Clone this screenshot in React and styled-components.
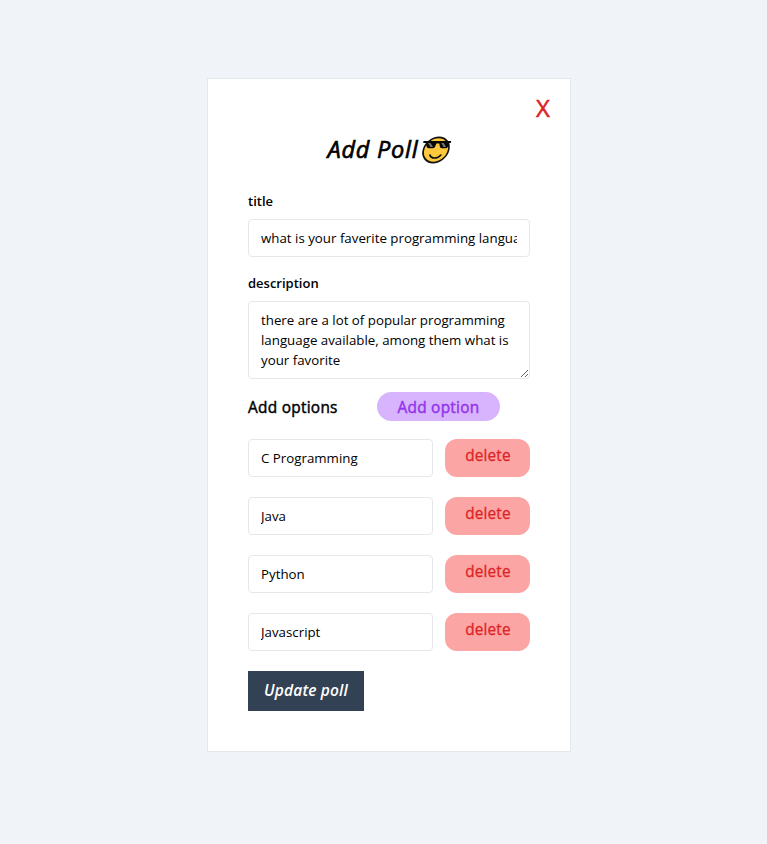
import React from "react";
import styled, { createGlobalStyle, css } from "styled-components";

const GlobalStyle = createGlobalStyle`
  *, *::before, *::after { box-sizing: border-box; }
  body {
    margin: 0;
    background: #f0f4f9;
    color: #000;
    font-family: "Open Sans", "Noto Sans", sans-serif;
  }
`;

const Page = styled.main`
  min-height: 844px;
  padding: 78px 0 0 207px;
  background: #f0f4f9;
`;

const Card = styled.form`
  width: 364px;
  height: 674px;
  padding: 13px 40px 0;
  display: flex;
  flex-direction: column;
  background: #fff;
  border: 1px solid #e5e7eb;
`;

const resetButton = css`
  border: 0;
  padding: 0;
  font-family: inherit;
  cursor: pointer;
`;

const CloseButton = styled.button`
  ${resetButton}
  align-self: flex-end;
  width: 14px;
  height: 32px;
  margin-right: -20px;
  display: flex;
  justify-content: center;
  background: transparent;
  color: #dc2626;
  font-size: 24px;
  line-height: 32px;
  -webkit-text-stroke: 0.5px currentColor;
`;

const Heading = styled.h1`
  height: 32px;
  margin: 9px 0 0;
  padding-left: 2px;
  display: flex;
  align-items: center;
  justify-content: center;
  gap: 3px;
  font-size: 23.5px;
  font-style: italic;
  font-weight: 400;
  line-height: 32px;
  letter-spacing: 0.75px;
  white-space: nowrap;
  -webkit-text-stroke: 0.65px currentColor;
`;

const Label = styled.label`
  height: 20px;
  margin-top: ${({ $top }) => $top}px;
  font-size: 13px;
  font-weight: 600;
  line-height: 20px;
`;

const fieldStyle = css`
  display: block;
  width: 100%;
  margin: 0;
  padding: 8px 12px;
  border: 1px solid #e5e7eb;
  border-radius: 4px;
  outline: 0;
  background: #fff;
  color: #000;
  font-family: inherit;
  font-size: 13.3px;
  line-height: 20px;
`;

const Input = styled.input`
  ${fieldStyle}
  height: 38px;
  flex-shrink: 0;
`;

const TitleInput = styled(Input)`
  margin-top: 8px;
`;

const TextArea = styled.textarea`
  ${fieldStyle}
  height: 78px;
  margin-top: 8px;
  overflow: hidden;
`;

const OptionsHeader = styled.div`
  height: 29px;
  margin-top: 13px;
  display: flex;
  align-items: center;
  gap: 39px;
`;

const mediumText = css`
  font-size: 15.4px;
  font-weight: 400;
  letter-spacing: 0.28px;
  -webkit-text-stroke: 0.45px currentColor;
`;

const OptionsTitle = styled.span`
  ${mediumText}
  width: 90px;
  padding-top: 2px;
  line-height: 24px;
  white-space: nowrap;
`;

const AddButton = styled.button`
  ${resetButton}
  ${mediumText}
  width: 123px;
  height: 29px;
  padding-top: 2px;
  border-radius: 15px;
  background: #d8b4fe;
  color: #9333ea;
  line-height: 27px;
`;

const Options = styled.div`
  margin-top: 18px;
  display: flex;
  flex-direction: column;
  gap: 20px;
`;

const OptionRow = styled.div`
  display: grid;
  grid-template-columns: 185px 85px;
  gap: 12px;
`;

const DeleteButton = styled.button`
  ${resetButton}
  ${mediumText}
  height: 38px;
  padding-bottom: 4px;
  padding-left: 1px;
  border-radius: 12px;
  background: #fca5a5;
  color: #dc2626;
  line-height: 24px;
  letter-spacing: 0.12px;
  -webkit-text-stroke: 0.3px currentColor;
`;

const SubmitButton = styled.button`
  ${resetButton}
  align-self: flex-start;
  width: 116px;
  height: 40px;
  margin-top: 20px;
  padding-bottom: 2px;
  background: #334155;
  color: #fff;
  font-size: 15.5px;
  font-style: italic;
  font-weight: 600;
  line-height: 24px;
  letter-spacing: 0.15px;
  white-space: nowrap;
`;

const FaceIcon = styled.svg`
  flex: none;
  margin-top: 1px;
`;

const CoolFace = () => (
  <FaceIcon width="31" height="30" viewBox="0 0 31 30" aria-label="cool face">
    <g transform="translate(15 15) skewX(-13)">
      <circle r="12.6" fill="#ffc83d" stroke="#111" strokeWidth="1.7" />
      <path d="M-5 5C-2.6 9 3.6 9 6 5" fill="none" stroke="#111" strokeWidth="1.6" strokeLinecap="round" />
    </g>
    <path d="M2.5 6H30.2L29.8 8H28.2L27 11.8Q26.5 13.2 25 13.2H20.7Q19 13.2 18.8 11.6L18.4 8.5H15.4L14.1 11.8Q13.5 13.2 12 13.2H7.7Q5.9 13.2 5.6 11.6L4.8 8H2.2Z" fill="#080808" />
    <path d="M7 8H9.4L12 12H9.6ZM20.3 8H22.7L25 12H22.6Z" fill="#777" />
  </FaceIcon>
);

const options = ["C Programming", "Java", "Python", "Javascript"];

export default function App() {
  return (
    <>
      <GlobalStyle />
      <Page>
        <Card onSubmit={(event) => event.preventDefault()}>
          <CloseButton type="button">X</CloseButton>
          <Heading>Add Poll<CoolFace /></Heading>
          <Label htmlFor="title" $top={26}>title</Label>
          <TitleInput id="title" defaultValue="what is your faverite programming language" />
          <Label htmlFor="description" $top={16}>description</Label>
          <TextArea
            id="description"
            defaultValue="there are a lot of popular programming language available, among them what is your favorite"
          />
          <OptionsHeader>
            <OptionsTitle>Add options</OptionsTitle>
            <AddButton type="button">Add option</AddButton>
          </OptionsHeader>
          <Options>
            {options.map((name) => (
              <OptionRow key={name}>
                <Input aria-label={name} defaultValue={name} />
                <DeleteButton type="button">delete</DeleteButton>
              </OptionRow>
            ))}
          </Options>
          <SubmitButton type="submit">Update poll</SubmitButton>
        </Card>
      </Page>
    </>
  );
}
